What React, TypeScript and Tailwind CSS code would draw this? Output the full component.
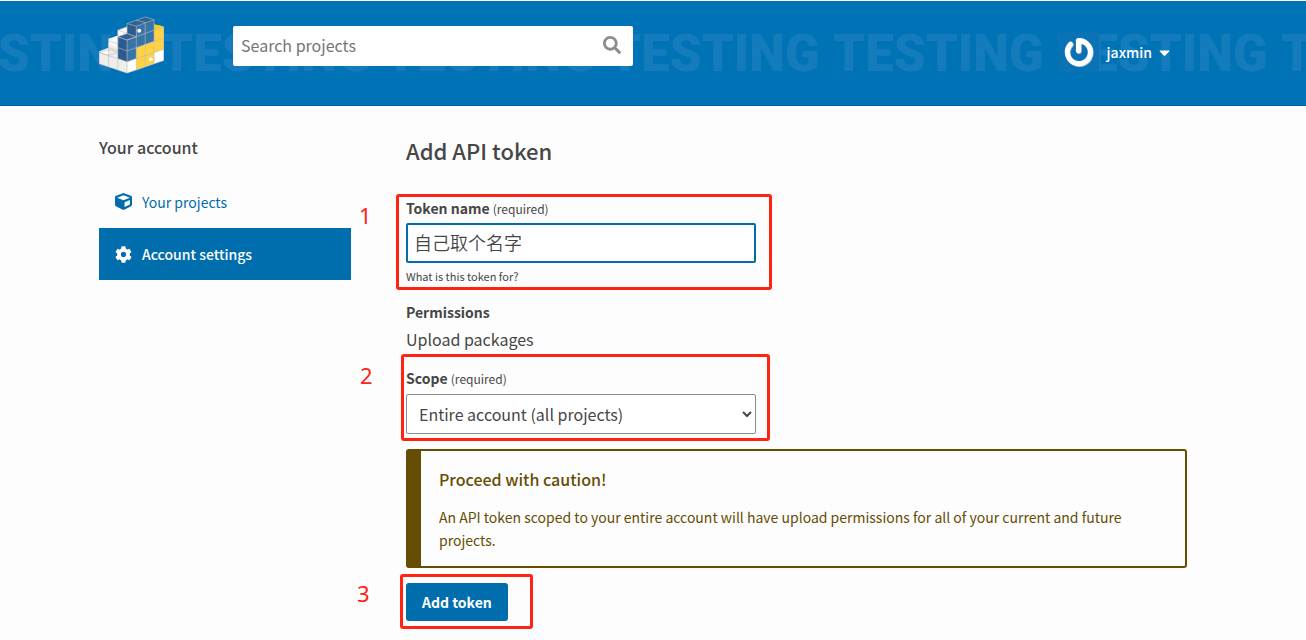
import React from "react";
import { FaCaretDown, FaCog, FaCube, FaSearch } from "react-icons/fa";

const BANNER_WORDS = ["TESTING", "TESTING", "TESTING", "TESTING", "TESTING", "TESTING", "TESTING"];

const SCOPE_OPTIONS = [{ value: "scope:user", label: "Entire account (all projects)" }];

type CalloutProps = {
  number: string;
  className: string;
  numberClassName: string;
};

// Red frame with a step number on its left, drawn over the form
const Callout = ({ number, className, numberClassName }: CalloutProps) => (
  <div className={`pointer-events-none absolute rounded-[3px] border-3 border-[#ff2314] ${className}`}>
    <span className={`absolute font-['Noto_Sans'] text-[22px] leading-6 text-[#ff2314] ${numberClassName}`}>
      {number}
    </span>
  </div>
);

const Logo = () => (
  <svg viewBox="23 16 197 174" className="h-[58px] w-[65px]" aria-hidden="true">
    <path
      d="M24 160V122L52 111V84L80 74V58L108 48L163 60L219 50V150L108 188Z"
      fill="#fbfaf8"
    />
    <path d="M24 126L52 135V169L24 160ZM52 100L80 110V178L52 169ZM80 144L108 154V188L80 178Z" fill="#efeeea" />
    <path d="M108 154L136 144V178L108 188ZM190 126L219 116V150L190 159Z" fill="#fff" />
    <path d="M136 111L190 92V57L205 43L219 48V116L190 126V159L136 178Z" fill="#ffd242" />
    <path d="M163 34L190 40L205 43L219 48L190 58Z" fill="#ffc91d" />
    <path d="M80 78L108 88V154L80 144ZM108 38L136 46V78L108 68Z" fill="#2c5b8e" />
    <path d="M108 88L136 78V46L190 26V92L136 111V144L108 154Z" fill="#3775a9" />
    <path d="M80 78L108 68L136 78L108 88ZM108 38L163 18L190 26L136 46Z" fill="#316293" />
    <g fill="none" stroke="#b9bcbe" strokeWidth="1.8" strokeLinejoin="round">
      <path d="M24 126L52 116L80 126L52 135ZM52 84V169M52 90L80 100L80 74M52 110L80 122M80 144V178" />
      <path d="M24 126V160L108 188L219 150V48L190 58M24 126L108 154L219 116" />
      <path d="M80 74V58L108 48M80 58L108 68M80 78L108 88L136 78L108 68ZV144M80 111L108 121L219 82" />
      <path d="M108 88V188M136 46V178M163 35V169M190 26V159M108 68V38L163 18L190 26L136 46L108 38M136 28L163 35M108 88L190 58" />
    </g>
    <circle cx="145" cy="60" r="6" fill="#fff" />
    <circle cx="180" cy="146" r="6" fill="#fff" />
  </svg>
);

const Avatar = () => (
  <svg viewBox="0 0 40 40" className="h-10 w-10" aria-hidden="true">
    <rect width="40" height="40" fill="#0b73b5" />
    <path
      d="M11.5 12.2A11.5 11.5 0 1 0 19.5 8.6V18.6"
      transform="translate(0.6 0.7)"
      fill="none"
      stroke="#a9c6d9"
      strokeWidth="5.2"
      strokeLinecap="round"
      strokeLinejoin="round"
    />
    <path
      d="M11.5 12.2A11.5 11.5 0 1 0 19.5 8.6V18.6"
      fill="none"
      stroke="#fff"
      strokeWidth="5.2"
      strokeLinecap="round"
      strokeLinejoin="round"
    />
  </svg>
);

const Header = () => (
  <header className="relative h-[106px] border-t border-b border-t-white border-b-[#0064a1] bg-[#0073b7] pr-5">
    <div className="absolute inset-0 overflow-hidden" aria-hidden="true">
      <div className="-ml-[63px] flex pt-3.5 font-['Roboto'] text-[51px] leading-[78px] font-black text-[#147cbc] select-none">
        {BANNER_WORDS.map((word, index) => (
          <span key={index} className="w-56 shrink-0">
            {word}
          </span>
        ))}
      </div>
    </div>
    <div className="relative mx-auto flex max-w-[1088px] items-start pt-[15px]">
      <a href="#home" aria-label="PyPI home">
        <Logo />
      </a>
      <form className="relative mt-2.5 ml-[69px] w-[400px]" onSubmit={(event) => event.preventDefault()}>
        <input
          type="search"
          aria-label="Search projects"
          placeholder="Search projects"
          className="h-10 w-full rounded-[2px] bg-white px-2 pb-0.5 text-base text-[#464646] placeholder:text-[#757575]"
        />
        <button type="submit" aria-label="Search" className="absolute top-2.5 right-3 text-[#8c8c8c]">
          <FaSearch size={18} />
        </button>
      </form>
      <button
        type="button"
        className="mt-4 mr-3.5 ml-auto flex items-center text-sm font-medium text-white"
      >
        <Avatar />
        <span className="ml-2">jaxmin</span>
        <FaCaretDown size={17} className="ml-1" />
      </button>
    </div>
  </header>
);

const Sidebar = () => (
  <nav className="w-[252px] shrink-0 pt-[31px]" aria-label="Your account">
    <h2 className="text-base leading-5 font-medium">Your account</h2>
    <ul className="mt-[18px] text-sm">
      <li>
        <a href="#projects" className="flex h-[53px] items-center px-4 text-[#006dad]">
          <FaCube size={17} />
          <span className="ml-2.5">Your projects</span>
        </a>
      </li>
      <li>
        <a href="#settings" className="flex h-[52px] items-center bg-[#006dad] px-4 font-medium text-white">
          <FaCog size={17} />
          <span className="ml-2.5">Account settings</span>
        </a>
      </li>
    </ul>
  </nav>
);

const Required = () => <span className="text-xs font-normal">(required)</span>;

const App = () => {
  const [tokenName, setTokenName] = React.useState("自己取个名字");
  const [scope, setScope] = React.useState("scope:user");

  return (
    <div className="min-h-screen bg-[#fdfdfd] font-['Noto_Sans_CJK_SC',sans-serif] text-[#464646]">
      <Header />
      <div className="pr-5">
        <div className="mx-auto flex max-w-[1088px] gap-[55px]">
          <Sidebar />
          <main className="min-w-0 flex-1 pt-[31px]">
            <h1 className="text-[22px] leading-[26px] font-medium">Add API token</h1>

            <form onSubmit={(event) => event.preventDefault()}>
              <div className="relative mt-[33px]">
                <label htmlFor="token-name" className="block text-sm leading-6 font-bold">
                  Token name <Required />
                </label>
                <input
                  id="token-name"
                  type="text"
                  value={tokenName}
                  onChange={(event) => setTokenName(event.target.value)}
                  className="mt-[3px] block h-10 w-[350px] rounded-[2px] border-2 border-[#006dad] bg-white px-1.5 pb-0.5 text-lg font-[350] outline-none"
                />
                <p className="mt-[3px] text-[11px] leading-5">What is this token for?</p>
                <Callout number="1" className="-top-0.5 -bottom-1 -left-[10px] w-[376px]" numberClassName="top-1.5 -left-10" />
              </div>

              <div className="mt-4">
                <h3 className="text-sm leading-5 font-bold">Permissions</h3>
                <p className="mt-1 text-base leading-[26px]">Upload packages</p>
              </div>

              <div className="relative mt-3.5">
                <label htmlFor="token-scope" className="block text-sm leading-6 font-bold">
                  Scope <Required />
                </label>
                <select
                  id="token-scope"
                  value={scope}
                  onChange={(event) => setScope(event.target.value)}
                  className="mt-1 block h-10 w-[350px] rounded-[2px] border border-[#8c8c8c] bg-white px-2 text-base"
                >
                  {SCOPE_OPTIONS.map((option) => (
                    <option key={option.value} value={option.value}>
                      {option.label}
                    </option>
                  ))}
                </select>
                <Callout number="2" className="-top-3 -bottom-[7px] -left-[5px] w-[369px]" numberClassName="top-1.5 -left-11" />
              </div>

              <div className="mt-[15px] rounded-[3px] border-2 border-l-[15px] border-[#654d03] px-[18px] pt-[18px] pb-3.5 text-[#654d03]">
                <h3 className="text-base leading-5 font-medium">Proceed with caution!</h3>
                <p className="mt-[17px] text-sm leading-[23px]">
                  An API token scoped to your entire account will have upload permissions for all of your current and
                  future projects.
                </p>
              </div>

              <div className="relative mt-[15px] w-fit">
                <button type="submit" className="h-[38px] rounded-[3px] bg-[#006dad] px-4 text-sm font-bold text-white">
                  Add token
                </button>
                <Callout number="3" className="-top-[9px] -bottom-2 -left-1.5 w-[133px]" numberClassName="top-1 -left-[46px]" />
              </div>
            </form>
          </main>
        </div>
      </div>
    </div>
  );
};

export default App;
